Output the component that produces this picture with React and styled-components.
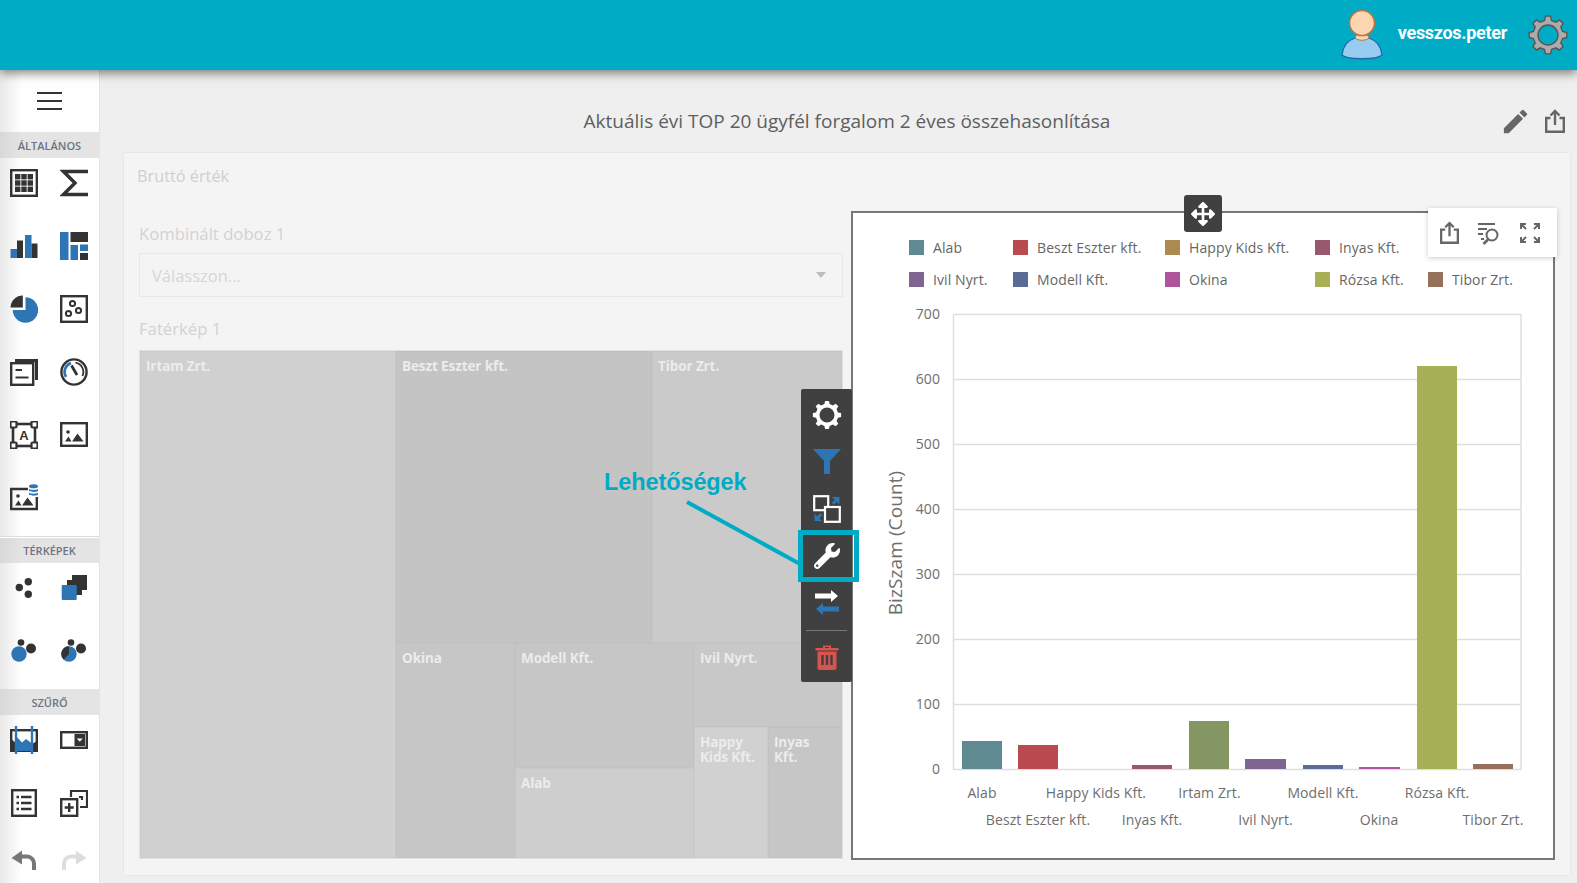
import React from "react"
import styled, { createGlobalStyle } from "styled-components"
import { FaWrench, FaArrowsAlt } from "react-icons/fa"
import { MdEdit } from "react-icons/md"

const BLUE = "#2e75b6"
const DARK = "#333"
const TEAL = "#00acc5"

const GlobalStyle = createGlobalStyle`
    html, body {
        margin: 0;
        padding: 0;
        height: 883px;
        overflow: hidden;
        background: #efefef;
        font-family: "Open Sans", sans-serif;
    }
    * { box-sizing: border-box; }
`

const gearPath = (c, rOut, rIn, rHole, teeth) => {
    const pts = []
    const step = (Math.PI * 2) / teeth
    for (let i = 0; i < teeth; i++) {
        const a = i * step - Math.PI / 2
        const p = (r, o) => `${(c + r * Math.cos(a + o * step)).toFixed(2)} ${(c + r * Math.sin(a + o * step)).toFixed(2)}`
        pts.push(p(rIn, -0.3), p(rOut, -0.17), p(rOut, 0.17), p(rIn, 0.3))
    }
    return `M${pts.join("L")}ZM${c - rHole} ${c}a${rHole} ${rHole} 0 1 0 ${rHole * 2} 0a${rHole} ${rHole} 0 1 0 ${-rHole * 2} 0Z`
}

const Page = styled.div`
    width: 1577px;
    height: 883px;
    display: flex;
    flex-direction: column;
    overflow: hidden;
`
const TopBar = styled.header`
    height: 70px;
    flex: none;
    background: ${TEAL};
    box-shadow: 0 3px 10px rgba(0, 0, 0, 0.5);
    position: relative;
    z-index: 3;
    display: flex;
    align-items: center;
    justify-content: flex-end;
    padding-right: 9px;
`
const UserName = styled.span`
    font-family: Roboto, sans-serif;
    font-weight: 700;
    font-size: 18px;
    color: #fff;
    margin: 0 21px 6px 14px;
    letter-spacing: -0.3px;
`
const Body = styled.div`
    flex: 1;
    display: flex;
    min-height: 0;
`
const Sidebar = styled.nav`
    width: 99px;
    flex: none;
    background: linear-gradient(90deg, #e9e9e9 0, #fff 22px);
    display: flex;
    flex-direction: column;
    margin-right: 1px;
    box-shadow: 1px 0 0 #e4e4e4;
`
const Burger = styled.div`
    height: 62px;
    display: flex;
    flex-direction: column;
    justify-content: center;
    align-items: center;
    gap: 5.5px;
    span {
        width: 25px;
        height: 2.5px;
        background: ${DARK};
    }
`
const SectionHead = styled.div`
    height: 26px;
    display: flex;
    align-items: center;
    justify-content: center;
    background: linear-gradient(90deg, #d8d8d8 0, #e4e4e4 22px);
    font-size: 11px;
    font-weight: 600;
    color: #6d7480;
    border-top: ${p => (p.$line ? "1px solid #fff" : "none")};
    box-shadow: ${p => (p.$line ? "0 -1px 0 #ddd" : "none")};
`
const IconGrid = styled.div`
    display: grid;
    grid-template-columns: 48px 51px;
    grid-auto-rows: 38px;
    row-gap: ${p => p.$gap}px;
    padding: ${p => p.$top}px 0 ${p => p.$bottom}px;
`
const IconCell = styled.div`
    display: flex;
    align-items: center;
    justify-content: center;
`
const Main = styled.main`
    flex: 1;
    min-width: 0;
    display: flex;
    flex-direction: column;
    padding: 0 7px 8px 24px;
`
const TitleRow = styled.div`
    height: 83px;
    flex: none;
    padding-top: 19px;
    display: grid;
    grid-template-columns: 1fr auto 1fr;
    align-items: center;
`
const Title = styled.h1`
    grid-column: 2;
    margin: 0;
    font-size: 19px;
    font-weight: 400;
    color: #5e5e5e;
`
const TitleActions = styled.div`
    grid-column: 3;
    justify-self: end;
    display: flex;
    align-items: center;
    gap: 14px;
    margin-right: 5px;
    color: #666;
`
const Card = styled.section`
    flex: 1;
    min-height: 0;
    background: #f4f4f4;
    box-shadow: 0 0 2px rgba(0, 0, 0, 0.1);
    display: flex;
    flex-direction: column;
    padding: 0 15px 15px;
`
const CardHead = styled.div`
    height: 59px;
    flex: none;
    padding-top: 11px;
    margin-left: -2px;
    font-size: 16.3px;
    line-height: 24px;
    color: #cfcfcf;
`
const CardBody = styled.div`
    flex: 1;
    min-height: 0;
    display: grid;
    grid-template-columns: 1fr 1fr;
    column-gap: 8px;
`
const Column = styled.div`
    display: flex;
    flex-direction: column;
    min-height: 0;
`
const FieldLabel = styled.div`
    height: ${p => p.$h}px;
    flex: none;
    display: flex;
    align-items: center;
    padding-top: ${p => p.$pt}px;
    font-size: 16.7px;
    color: #d2d2d2;
`
const SelectBox = styled.div`
    height: 44px;
    flex: none;
    border: 1px solid #e8e8e8;
    display: flex;
    align-items: center;
    justify-content: space-between;
    padding: 0 16px 0 12px;
    font-size: 16.5px;
    color: #d6d6d6;
    &::after {
        content: "";
        border: 5px solid transparent;
        border-top: 6px solid #bdbdbd;
        border-bottom: 0;
    }
`
const Treemap = styled.div`
    flex: 1;
    min-height: 0;
    margin-bottom: 1px;
    display: flex;
    border: 1px solid #e2e2e2;
`
const Split = styled.div`
    display: flex;
    flex-direction: ${p => (p.$col ? "column" : "row")};
    flex: ${p => (p.$size ? `0 0 ${p.$size}px` : "1 1 0")};
    min-width: 0;
    min-height: 0;
`
const Cell = styled.div`
    flex: ${p => (p.$size ? `0 0 ${p.$size}px` : "1 1 0")};
    min-width: 0;
    min-height: 0;
    background: ${p => p.$bg};
    box-shadow: inset 0 0 0 0.5px rgba(0, 0, 0, 0.04);
    padding: 8px 8px 8px 6px;
    font-size: 13.5px;
    font-weight: 700;
    line-height: 15px;
    color: #ececec;
    letter-spacing: -0.1px;
`
const ChartPanel = styled.div`
    position: relative;
    margin-top: -1px;
    border: 2px solid #777;
    background: #fff;
    display: flex;
    flex-direction: column;
    min-height: 0;
`
const Legend = styled.div`
    flex: none;
    display: grid;
    grid-template-columns: 104px 152px 150px 113px auto;
    grid-auto-rows: 32px;
    padding: 18px 0 0 56px;
`
const LegendItem = styled.div`
    display: flex;
    align-items: center;
    gap: 9px;
    font-size: 14px;
    color: #666;
    letter-spacing: 0.1px;
`
const Swatch = styled.i`
    width: 15px;
    height: 15px;
    flex: none;
    background: ${p => p.$color};
`
const ChartSvg = styled.svg`
    flex: 1;
    min-height: 0;
    width: 100%;
    display: block;
`
const AxisText = styled.text`
    font-family: "Open Sans", sans-serif;
    font-size: ${p => p.$size || 14}px;
    fill: #6e6e6e;
    letter-spacing: 0.1px;
`
const MoveHandle = styled.div`
    position: absolute;
    top: -18px;
    left: 331px;
    width: 38px;
    height: 37px;
    border-radius: 3px;
    background: #404040;
    color: #fff;
    display: flex;
    align-items: center;
    justify-content: center;
`
const PanelPopup = styled.div`
    position: absolute;
    top: -5px;
    right: -4px;
    width: 129px;
    height: 49px;
    background: #fff;
    box-shadow: 0 1px 5px rgba(0, 0, 0, 0.2);
    display: flex;
    align-items: center;
    justify-content: space-around;
    padding: 0 8px 0 3px;
`
const SideTools = styled.div`
    position: absolute;
    top: 176px;
    left: -52px;
    width: 51px;
    background: #404040;
    border-radius: 2px;
    padding-top: 2px;
    display: flex;
    flex-direction: column;
    z-index: 2;
`
const ToolButton = styled.div`
    position: relative;
    height: ${p => p.$h || 47}px;
    color: #fff;
    display: flex;
    align-items: center;
    justify-content: center;
    &::after {
        content: ${p => (p.$active ? '""' : "none")};
        position: absolute;
        inset: -2px -7px -3px -3px;
        border: 5px solid ${TEAL};
    }
`
const ToolDivider = styled.div`
    height: 1px;
    margin: 4px 5px 0;
    background: #777;
`
const CalloutText = styled.div`
    position: absolute;
    top: 254px;
    left: -249px;
    font-family: "Liberation Sans", sans-serif;
    font-weight: 700;
    font-size: 23.5px;
    line-height: 30px;
    letter-spacing: -0.1px;
    color: ${TEAL};
    white-space: nowrap;
    z-index: 2;
`
const CalloutLine = styled.svg`
    position: absolute;
    top: 287px;
    left: -169px;
    z-index: 2;
`

const GearIcon = ({ size, fill, stroke }) => (
    <svg width={size} height={size} viewBox="0 0 40 40">
        <path d={gearPath(20, 19, 15, 10, 8)} fill={fill} fillRule="evenodd" stroke={stroke} strokeWidth={stroke ? 1.4 : 0} />
    </svg>
)

const ShareIcon = ({ w = 20, h = 24, color = "#666" }) => (
    <svg width={w} height={h} viewBox="0 0 20 24" fill="none" stroke={color} strokeWidth="2.4">
        <path d="M5.5 9H1.2v13.8h17.6V9h-4.3" />
        <path d="M10 16V2M5.5 6.5 10 2l4.500 4.500" />
    </svg>
)

const Ico = ({ children }) => (
    <svg width="28" height="28" viewBox="0 0 28 28">
        {children}
    </svg>
)

const icons = {
    table: (
        <Ico>
            <rect x="1.2" y="1.200" width="25.6" height="25.6" fill="none" stroke={DARK} strokeWidth="2.4" />
            {[5, 11.300, 17.600].map(x => [5, 11.300, 17.600].map(y => <rect key={`${x}-${y}`} x={x} y={y} width="5.400" height="5.400" fill={DARK} />))}
        </Ico>
    ),
    sigma: (
        <Ico>
            <path d="M28 2.500H3.500L15 14 3.500 25.500H28" fill="none" stroke={DARK} strokeWidth="3.400" />
        </Ico>
    ),
    bars: (
        <Ico>
            <rect x="0.500" y="17" width="6.500" height="9" fill={BLUE} />
            <rect x="7" y="8.500" width="6" height="17.500" fill={DARK} />
            <rect x="15" y="3" width="6.500" height="23" fill={BLUE} />
            <rect x="21.500" y="11.500" width="6" height="14.500" fill={DARK} />
        </Ico>
    ),
    treemap: (
        <Ico>
            <rect x="0" y="0" width="8.500" height="28" fill={BLUE} />
            <rect x="10.500" y="13" width="7.500" height="15" fill={BLUE} />
            <rect x="10.500" y="0" width="17.500" height="10" fill={DARK} />
            <rect x="20" y="12.500" width="8" height="6.500" fill={BLUE} />
            <rect x="20" y="21" width="8" height="7" fill={DARK} />
        </Ico>
    ),
    pie: (
        <Ico>
            <path d="M15.500 2.300A12.700 12.700 0 1 1 2.800 15H15.500Z" fill={BLUE} />
            <path d="M12.800 0.500A12.300 12.300 0 0 0 0.500 12.500H12.800Z" fill={DARK} />
        </Ico>
    ),
    scatter: (
        <Ico>
            <rect x="1.200" y="1.200" width="25.600" height="25.600" fill="none" stroke={DARK} strokeWidth="2.400" />
            <circle cx="12.500" cy="8.500" r="2.600" fill="none" stroke={DARK} strokeWidth="2" />
            <circle cx="8.500" cy="18.500" r="2.600" fill="none" stroke={DARK} strokeWidth="2" />
            <circle cx="18.500" cy="15.500" r="2.600" fill="none" stroke={DARK} strokeWidth="2" />
        </Ico>
    ),
    cards: (
        <Ico>
            <path d="M5 1h23v21h-3V4H5Z" fill={DARK} />
            <rect x="1.200" y="5.200" width="22" height="21.600" fill="#fff" stroke={DARK} strokeWidth="2.400" />
            <path d="M5.500 12h6.500M5.500 19.500h13" stroke={DARK} strokeWidth="2.200" />
        </Ico>
    ),
    gauge: (
        <Ico>
            <circle cx="14" cy="14" r="12.600" fill="none" stroke={DARK} strokeWidth="2.400" />
            <path d="M6 19A9.500 9.500 0 0 1 11 5" fill="none" stroke={BLUE} strokeWidth="2.600" />
            <path d="M15.500 4.700A9.500 9.500 0 0 1 22.500 18" fill="none" stroke={DARK} strokeWidth="1.800" />
            <path d="M11.500 7.500 17 17" stroke={DARK} strokeWidth="2.800" />
        </Ico>
    ),
    textBox: (
        <Ico>
            <rect x="3" y="3" width="22" height="22" fill="none" stroke={DARK} strokeWidth="2.600" />
            {[[0.500, 0.500], [21.500, 0.500], [0.500, 21.500], [21.500, 21.500]].map(([x, y]) => (
                <rect key={`${x}${y}`} x={x} y={y} width="6" height="6" rx="1" fill="#fff" stroke={DARK} strokeWidth="2.200" />
            ))}
            <text x="14" y="18.500" textAnchor="middle" fontFamily="Liberation Sans, sans-serif" fontWeight="700" fontSize="13" fill={DARK}>A</text>
        </Ico>
    ),
    image: (
        <Ico>
            <rect x="1.200" y="2.200" width="25.600" height="22.600" fill="none" stroke={DARK} strokeWidth="2.400" />
            <circle cx="8" cy="11" r="1.800" fill={DARK} />
            <path d="M5 20.500 8.500 15.500 11.500 20.500ZM12 20.500 17.500 12.500 23.500 20.500Z" fill={DARK} />
        </Ico>
    ),
    imageDb: (
        <Ico>
            <path d="M18 5H1.200V25H26.800V13" fill="none" stroke={DARK} strokeWidth="2.400" />
            <circle cx="8" cy="12" r="1.800" fill={DARK} />
            <path d="M5 21.500 8.500 16.500 11.500 21.500ZM12 21.500 17.500 13.500 23.500 21.500Z" fill={DARK} />
            <ellipse cx="23.500" cy="2.300" rx="4.500" ry="2" fill={BLUE} />
            <path d="M19 4.700c1 1.600 8 1.600 9 0v2c-1 1.600-8 1.600-9 0ZM19 8.500c1 1.600 8 1.600 9 0v2c-1 1.600-8 1.600-9 0Z" fill={BLUE} />
        </Ico>
    ),
    dots: (
        <Ico>
            <circle cx="9.300" cy="14.500" r="3.700" fill={DARK} />
            <circle cx="18.300" cy="8.700" r="3.700" fill={DARK} />
            <circle cx="18.300" cy="21.300" r="3.700" fill={DARK} />
        </Ico>
    ),
    layers: (
        <Ico>
            <rect x="12" y="2" width="15" height="15" fill={DARK} />
            <rect x="7" y="7" width="15" height="15" fill={DARK} />
            <rect x="1.700" y="12" width="15" height="15" rx="1" fill={BLUE} />
        </Ico>
    ),
    bubble: (
        <Ico>
            <circle cx="9" cy="20" r="7.700" fill={BLUE} />
            <circle cx="21" cy="14.500" r="5" fill={DARK} />
            <circle cx="11" cy="8.500" r="3.300" fill={DARK} />
        </Ico>
    ),
    pieBubble: (
        <Ico>
            <circle cx="9" cy="20" r="7.700" fill={BLUE} />
            <path d="M9 12.300A7.700 7.700 0 0 0 3.600 25.500L9 20Z" fill={DARK} />
            <circle cx="21" cy="14.500" r="5" fill={DARK} />
            <circle cx="11" cy="8.500" r="3.300" fill={DARK} />
        </Ico>
    ),
    range: (
        <Ico>
            <rect x="1.200" y="4.200" width="25.600" height="20.600" fill="#fff" stroke={DARK} strokeWidth="2.400" />
            <path d="M1 24V13l5 4v8H1ZM27 24V15l-5 3v7h5Z" fill={DARK} />
            <path d="M6 25V10l6 6.500 4-3.500 6 4.500V25Z" fill={BLUE} />
            <path d="M6 0v28M22 0v28" stroke={BLUE} strokeWidth="2.400" />
        </Ico>
    ),
    combo: (
        <Ico>
            <rect x="1.200" y="6.200" width="25.600" height="15.600" fill="none" stroke={DARK} strokeWidth="2.400" />
            <rect x="14.500" y="8" width="10.500" height="12" fill={DARK} />
            <path d="M16.800 12.500h6l-3 3.300Z" fill="#fff" />
        </Ico>
    ),
    list: (
        <Ico>
            <rect x="2.200" y="1.200" width="23.600" height="25.600" fill="none" stroke={DARK} strokeWidth="2.400" />
            {[8, 14, 20].map(y => (
                <path key={y} d={`M6.500 ${y}h2.500M11 ${y}h10.500`} stroke={DARK} strokeWidth="2.400" />
            ))}
        </Ico>
    ),
    addGroup: (
        <Ico>
            <path d="M11 8V2h16v16h-7M19 8h3v3" fill="none" stroke={DARK} strokeWidth="2.200" />
            <rect x="1.200" y="10.200" width="16" height="16.600" fill="#fff" stroke={DARK} strokeWidth="2.400" />
            <path d="M9.200 14v9M4.700 18.500h9" stroke={DARK} strokeWidth="2.400" />
        </Ico>
    ),
    undo: (
        <Ico>
            <path d="M9 11.500h8a7 7 0 0 1 7 7V25" fill="none" stroke="#777" strokeWidth="4" />
            <path d="M1.500 13 12 5.500v14Z" fill="#777" />
        </Ico>
    ),
    redo: (
        <Ico>
            <path d="M19 11.500h-8a7 7 0 0 0-7 7V25" fill="none" stroke="#ddd" strokeWidth="4" />
            <path d="M26.500 13 16 5.500v14Z" fill="#ddd" />
        </Ico>
    ),
}

const series = [
    { name: "Alab", color: "#5f8a92", x: 962, w: 40, top: 741 },
    { name: "Beszt Eszter kft.", color: "#b94a50", x: 1018, w: 40, top: 745 },
    { name: "Happy Kids Kft.", color: "#ad8a52" },
    { name: "Inyas Kft.", color: "#98596f", x: 1132, w: 40, top: 765 },
    { name: "Irtam Zrt.", color: "#849662", x: 1189, w: 40, top: 721 },
    { name: "Ivil Nyrt.", color: "#7f6690", x: 1245, w: 41, top: 759 },
    { name: "Modell Kft.", color: "#5b6b97", x: 1303, w: 40, top: 765 },
    { name: "Okina", color: "#b0549c", x: 1359, w: 41, top: 767 },
    { name: "Rózsa Kft.", color: "#a7b054", x: 1417, w: 40, top: 366 },
    { name: "Tibor Zrt.", color: "#97705c", x: 1473, w: 40, top: 764 },
]

const legendRows = [
    ["Alab", "Beszt Eszter kft.", "Happy Kids Kft.", "Inyas Kft.", null],
    ["Ivil Nyrt.", "Modell Kft.", "Okina", "Rózsa Kft.", "Tibor Zrt."],
]

const axisLabels = [
    ["Alab", 982, 794],
    ["Beszt Eszter kft.", 1038, 821],
    ["Happy Kids Kft.", 1096, 794],
    ["Inyas Kft.", 1152, 821],
    ["Irtam Zrt.", 1209.500, 794],
    ["Ivil Nyrt.", 1265.500, 821],
    ["Modell Kft.", 1323, 794],
    ["Okina", 1379, 821],
    ["Rózsa Kft.", 1437, 794],
    ["Tibor Zrt.", 1493, 821],
]

const Chart = () => (
    <ChartSvg viewBox="853 295 700 563" preserveAspectRatio="xMinYMin meet">
        {[0, 1, 2, 3, 4, 5, 6, 7].map(i => {
            const y = 769.500 - i * 65
            return (
                <g key={i}>
                    <line x1="953.500" x2="1521" y1={y} y2={y} stroke="#dedede" strokeWidth="1.500" />
                    <AxisText x="940" y={y + 4.500} textAnchor="end">{i * 100}</AxisText>
                </g>
            )
        })}
        <path d="M953.500 314V770M1521 314V770" stroke="#dedede" strokeWidth="1.500" />
        {series.filter(s => s.x).map(s => (
            <rect key={s.name} x={s.x} y={s.top} width={s.w} height={769 - s.top} fill={s.color} />
        ))}
        {axisLabels.map(([t, x, y]) => (
            <AxisText key={t} x={x} y={y + 4} textAnchor="middle">{t}</AxisText>
        ))}
        <AxisText $size={19} x="0" y="0" textAnchor="middle" transform="translate(902 543) rotate(-90)">BizSzam (Count)</AxisText>
    </ChartSvg>
)

const colorOf = name => series.find(s => s.name === name).color

export default function App() {
    return (
        <Page>
            <GlobalStyle />
            <TopBar>
                <svg width="44" height="52" viewBox="0 0 44 52">
                    <path d="M2 46c1-10 7-15 13-17h14c6 2 12 7 13 17-5 5-35 5-40 0Z" fill="#98cbf0" stroke="#1f69b0" strokeWidth="1.300" />
                    <path d="M15 29c3 3 11 3 14 0l-2-4H17Z" fill="#fdd5b1" stroke="#b5764a" />
                    <circle cx="22" cy="14" r="12.500" fill="#fdd5b1" stroke="#b5764a" strokeWidth="1.600" />
                </svg>
                <UserName>vesszos.peter</UserName>
                <GearIcon size={40} fill="#ababab" stroke="#555" />
            </TopBar>
            <Body>
                <Sidebar>
                    <Burger><span /><span /><span /></Burger>
                    <SectionHead>ÁLTALÁNOS</SectionHead>
                    <IconGrid $gap={25} $top={6} $bottom={20}>
                        {["table", "sigma", "bars", "treemap", "pie", "scatter", "cards", "gauge", "textBox", "image", "imageDb"].map(k => (
                            <IconCell key={k}>{icons[k]}</IconCell>
                        ))}
                    </IconGrid>
                    <SectionHead $line>TÉRKÉPEK</SectionHead>
                    <IconGrid $gap={23} $top={5} $bottom={22}>
                        {["dots", "layers", "bubble", "pieBubble"].map(k => (
                            <IconCell key={k}>{icons[k]}</IconCell>
                        ))}
                    </IconGrid>
                    <SectionHead>SZŰRŐ</SectionHead>
                    <IconGrid $gap={25} $top={6} $bottom={18}>
                        {["range", "combo", "list", "addGroup"].map(k => (
                            <IconCell key={k}>{icons[k]}</IconCell>
                        ))}
                    </IconGrid>
                    <IconGrid $gap={0} $top={0} $bottom={0}>
                        <IconCell>{icons.undo}</IconCell>
                        <IconCell>{icons.redo}</IconCell>
                    </IconGrid>
                </Sidebar>
                <Main>
                    <TitleRow>
                        <Title>Aktuális évi TOP 20 ügyfél forgalom 2 éves összehasonlítása</Title>
                        <TitleActions>
                            <MdEdit size={31} />
                            <ShareIcon />
                        </TitleActions>
                    </TitleRow>
                    <Card>
                        <CardHead>Bruttó érték</CardHead>
                        <CardBody>
                            <Column>
                                <FieldLabel $h={41} $pt={2}>Kombinált doboz 1</FieldLabel>
                                <SelectBox>Válasszon...</SelectBox>
                                <FieldLabel $h={53} $pt={10}>Fatérkép 1</FieldLabel>
                                <Treemap>
                                    <Cell $size={256} $bg="#d0d0d0">Irtam Zrt.</Cell>
                                    <Split $col>
                                        <Split $size={292}>
                                            <Cell $size={256} $bg="#c4c4c4">Beszt Eszter kft.</Cell>
                                            <Cell $bg="#cacaca">Tibor Zrt.</Cell>
                                        </Split>
                                        <Split>
                                            <Cell $size={119} $bg="#c6c6c6">Okina</Cell>
                                            <Split $col $size={179}>
                                                <Cell $size={125} $bg="#c6c6c6">Modell Kft.</Cell>
                                                <Cell $bg="#cecece">Alab</Cell>
                                            </Split>
                                            <Split $col>
                                                <Cell $size={84} $bg="#c8c8c8">Ivil Nyrt.</Cell>
                                                <Split>
                                                    <Cell $size={74} $bg="#d1d1d1">Happy Kids Kft.</Cell>
                                                    <Cell $bg="#c6c6c6">Inyas Kft.</Cell>
                                                </Split>
                                            </Split>
                                        </Split>
                                    </Split>
                                </Treemap>
                            </Column>
                            <ChartPanel>
                                <Legend>
                                    {legendRows.flat().map((name, i) =>
                                        name ? (
                                            <LegendItem key={name}>
                                                <Swatch $color={colorOf(name)} />
                                                {name}
                                            </LegendItem>
                                        ) : (
                                            <span key={i} />
                                        )
                                    )}
                                </Legend>
                                <Chart />
                                <MoveHandle><FaArrowsAlt size={24} /></MoveHandle>
                                <PanelPopup>
                                    <ShareIcon w={19} h={23} />
                                    <svg width="24" height="24" viewBox="0 0 24 24" fill="none" stroke="#666" strokeWidth="2">
                                        <path d="M1 3h17M1 8h9M1 13h5M4 18h3" />
                                        <circle cx="15" cy="14" r="5.500" />
                                        <path d="M11 18.500 6.500 23" strokeWidth="2.600" />
                                    </svg>
                                    <svg width="20" height="20" viewBox="0 0 20 20" fill="none" stroke="#666" strokeWidth="2">
                                        <path d="M1 6V1h5M1 1l5 5M19 6V1h-5M19 1l-5 5M1 14v5h5M1 19l5-5M19 14v5h-5M19 19l-5-5" />
                                    </svg>
                                </PanelPopup>
                                <CalloutText>Lehetőségek</CalloutText>
                                <CalloutLine width="120" height="70" viewBox="0 0 120 70">
                                    <line x1="3" y1="2" x2="116" y2="64" stroke={TEAL} strokeWidth="4" />
                                </CalloutLine>
                                <SideTools>
                                    <ToolButton><GearIcon size={30} fill="#fff" /></ToolButton>
                                    <ToolButton>
                                        <svg width="28" height="25" viewBox="0 0 28 25"><path d="M0 0h28L17 12v13h-6V12Z" fill={BLUE} /></svg>
                                    </ToolButton>
                                    <ToolButton>
                                        <svg width="28" height="28" viewBox="0 0 28 28" fill="none">
                                            <rect x="1.200" y="1.200" width="14" height="14" stroke="#fff" strokeWidth="2.200" />
                                            <rect x="12" y="12" width="14.800" height="14.800" stroke="#fff" strokeWidth="2.200" fill="#404040" />
                                            <path d="M19 2h7.500v7.500l-2.700-2.700-3 3-2-2 3-3ZM9 26H1.500v-7.500l2.700 2.700 3-3 2 2-3 3Z" fill={BLUE} />
                                        </svg>
                                    </ToolButton>
                                    <ToolButton $active><FaWrench size={26} /></ToolButton>
                                    <ToolButton>
                                        <svg width="26" height="26" viewBox="0 0 26 26">
                                            <path d="M1 3.500h16V0l7 6-7 6V8.500H1Z" fill="#fff" />
                                            <path d="M25 16.500H9V13l-7 6 7 6v-3.500h16Z" fill={BLUE} />
                                        </svg>
                                    </ToolButton>
                                    <ToolDivider />
                                    <ToolButton $h={51}>
                                        <svg width="24" height="26" viewBox="0 0 24 26">
                                            <path d="M0.500 4h23v2.500H0.500ZM8 1.500h8V4h-2V3h-4v1H8Z" fill="#d9534f" />
                                            <path d="M2.500 7.500h19V24a2 2 0 0 1-2 2h-15a2 2 0 0 1-2-2Z" fill="#d9534f" />
                                            <path d="M7.500 11v10M12 11v10M16.500 11v10" stroke="#404040" strokeWidth="2.400" />
                                        </svg>
                                    </ToolButton>
                                </SideTools>
                            </ChartPanel>
                        </CardBody>
                    </Card>
                </Main>
            </Body>
        </Page>
    )
}
